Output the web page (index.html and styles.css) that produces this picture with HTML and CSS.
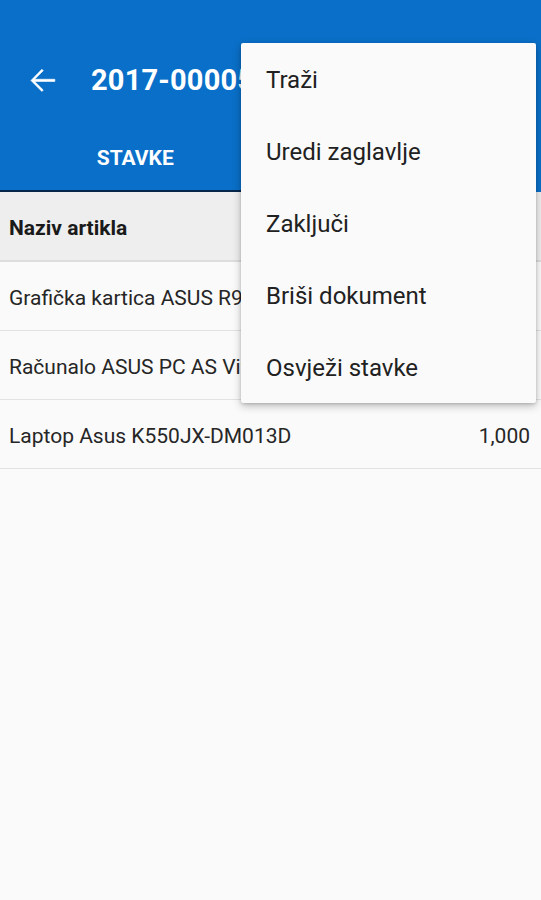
FILE: index.html
```html
<!DOCTYPE html>
<html>
<head>
<meta charset="utf-8">
<link rel="stylesheet" href="styles.css">
</head>
<body>
<div class="app">
  <header class="appbar">
    <div class="toolbar">
      <svg class="back" width="37" height="37" viewBox="0 0 24 24"><path d="M20 11.2H6.9l5.6-5.6-0.9-0.9L4.5 12l7.1 7.1 0.9-0.9-5.6-5.6H20z" fill="#fff" stroke="#fff" stroke-width="0.4"/></svg>
      <div class="title">2017-00005</div>
    </div>
    <div class="tabs">
      <div class="tab active">STAVKE</div>
      <div class="tab"></div>
    </div>
  </header>
  <div class="thead"><span>Naziv artikla</span><span class="qty"></span></div>
  <div class="row"><span>Grafička kartica ASUS R9 380</span><span class="qty"></span></div>
  <div class="row"><span>Računalo ASUS PC AS Vivo</span><span class="qty"></span></div>
  <div class="row"><span>Laptop Asus K550JX-DM013D</span><span class="qty">1,000</span></div>

  <div class="menu">
    <div class="item">Traži</div>
    <div class="item">Uredi zaglavlje</div>
    <div class="item">Zaključi</div>
    <div class="item">Briši dokument</div>
    <div class="item">Osvježi stavke</div>
  </div>
</div>
</body>
</html>
```
FILE: styles.css
```css
* { box-sizing: border-box; }
html, body { margin: 0; padding: 0; }
body { background: #fafafa; font-family: Roboto, "Noto Sans", sans-serif; width: 541px; height: 900px; overflow: hidden; }
.app { position: relative; width: 541px; height: 900px; background: #fafafa; }
.appbar { background: #0a6fc8; height: 192px; display: flex; flex-direction: column; }
.toolbar { height: 118px; display: flex; align-items: center; padding-left: 24px; padding-top: 42px; }
.back { margin-right: 30px; }
.title { color: #fff; font-size: 29px; font-weight: 700; letter-spacing: 0.2px; }
.tabs { display: flex; flex: 1; }
.tab { flex: 1; display: flex; align-items: center; justify-content: center; color: #fff; font-size: 21px; font-weight: 700; padding-top: 8px; }
.tab.active { border-bottom: 2px solid #06264a; }
.thead { height: 70px; background: #eeeeee; display: flex; align-items: center; justify-content: space-between; padding: 4px 11px 0 9px; font-size: 21px; font-weight: 700; color: #1a1a1a; border-bottom: 2px solid #dddddd; }
.row { height: 69px; display: flex; align-items: center; justify-content: space-between; padding: 3px 11px 0 9px; font-size: 21px; color: #262626; border-bottom: 1px solid #e2e2e2; }
.menu { position: absolute; left: 241px; top: 43px; width: 295px; background: #fafafa; border-radius: 2px; box-shadow: 0 3px 8px rgba(0,0,0,0.25), 0 1px 3px rgba(0,0,0,0.15); }
.item { height: 72px; display: flex; align-items: center; padding: 2px 0 0 25px; font-size: 24px; color: #212121; }
```
